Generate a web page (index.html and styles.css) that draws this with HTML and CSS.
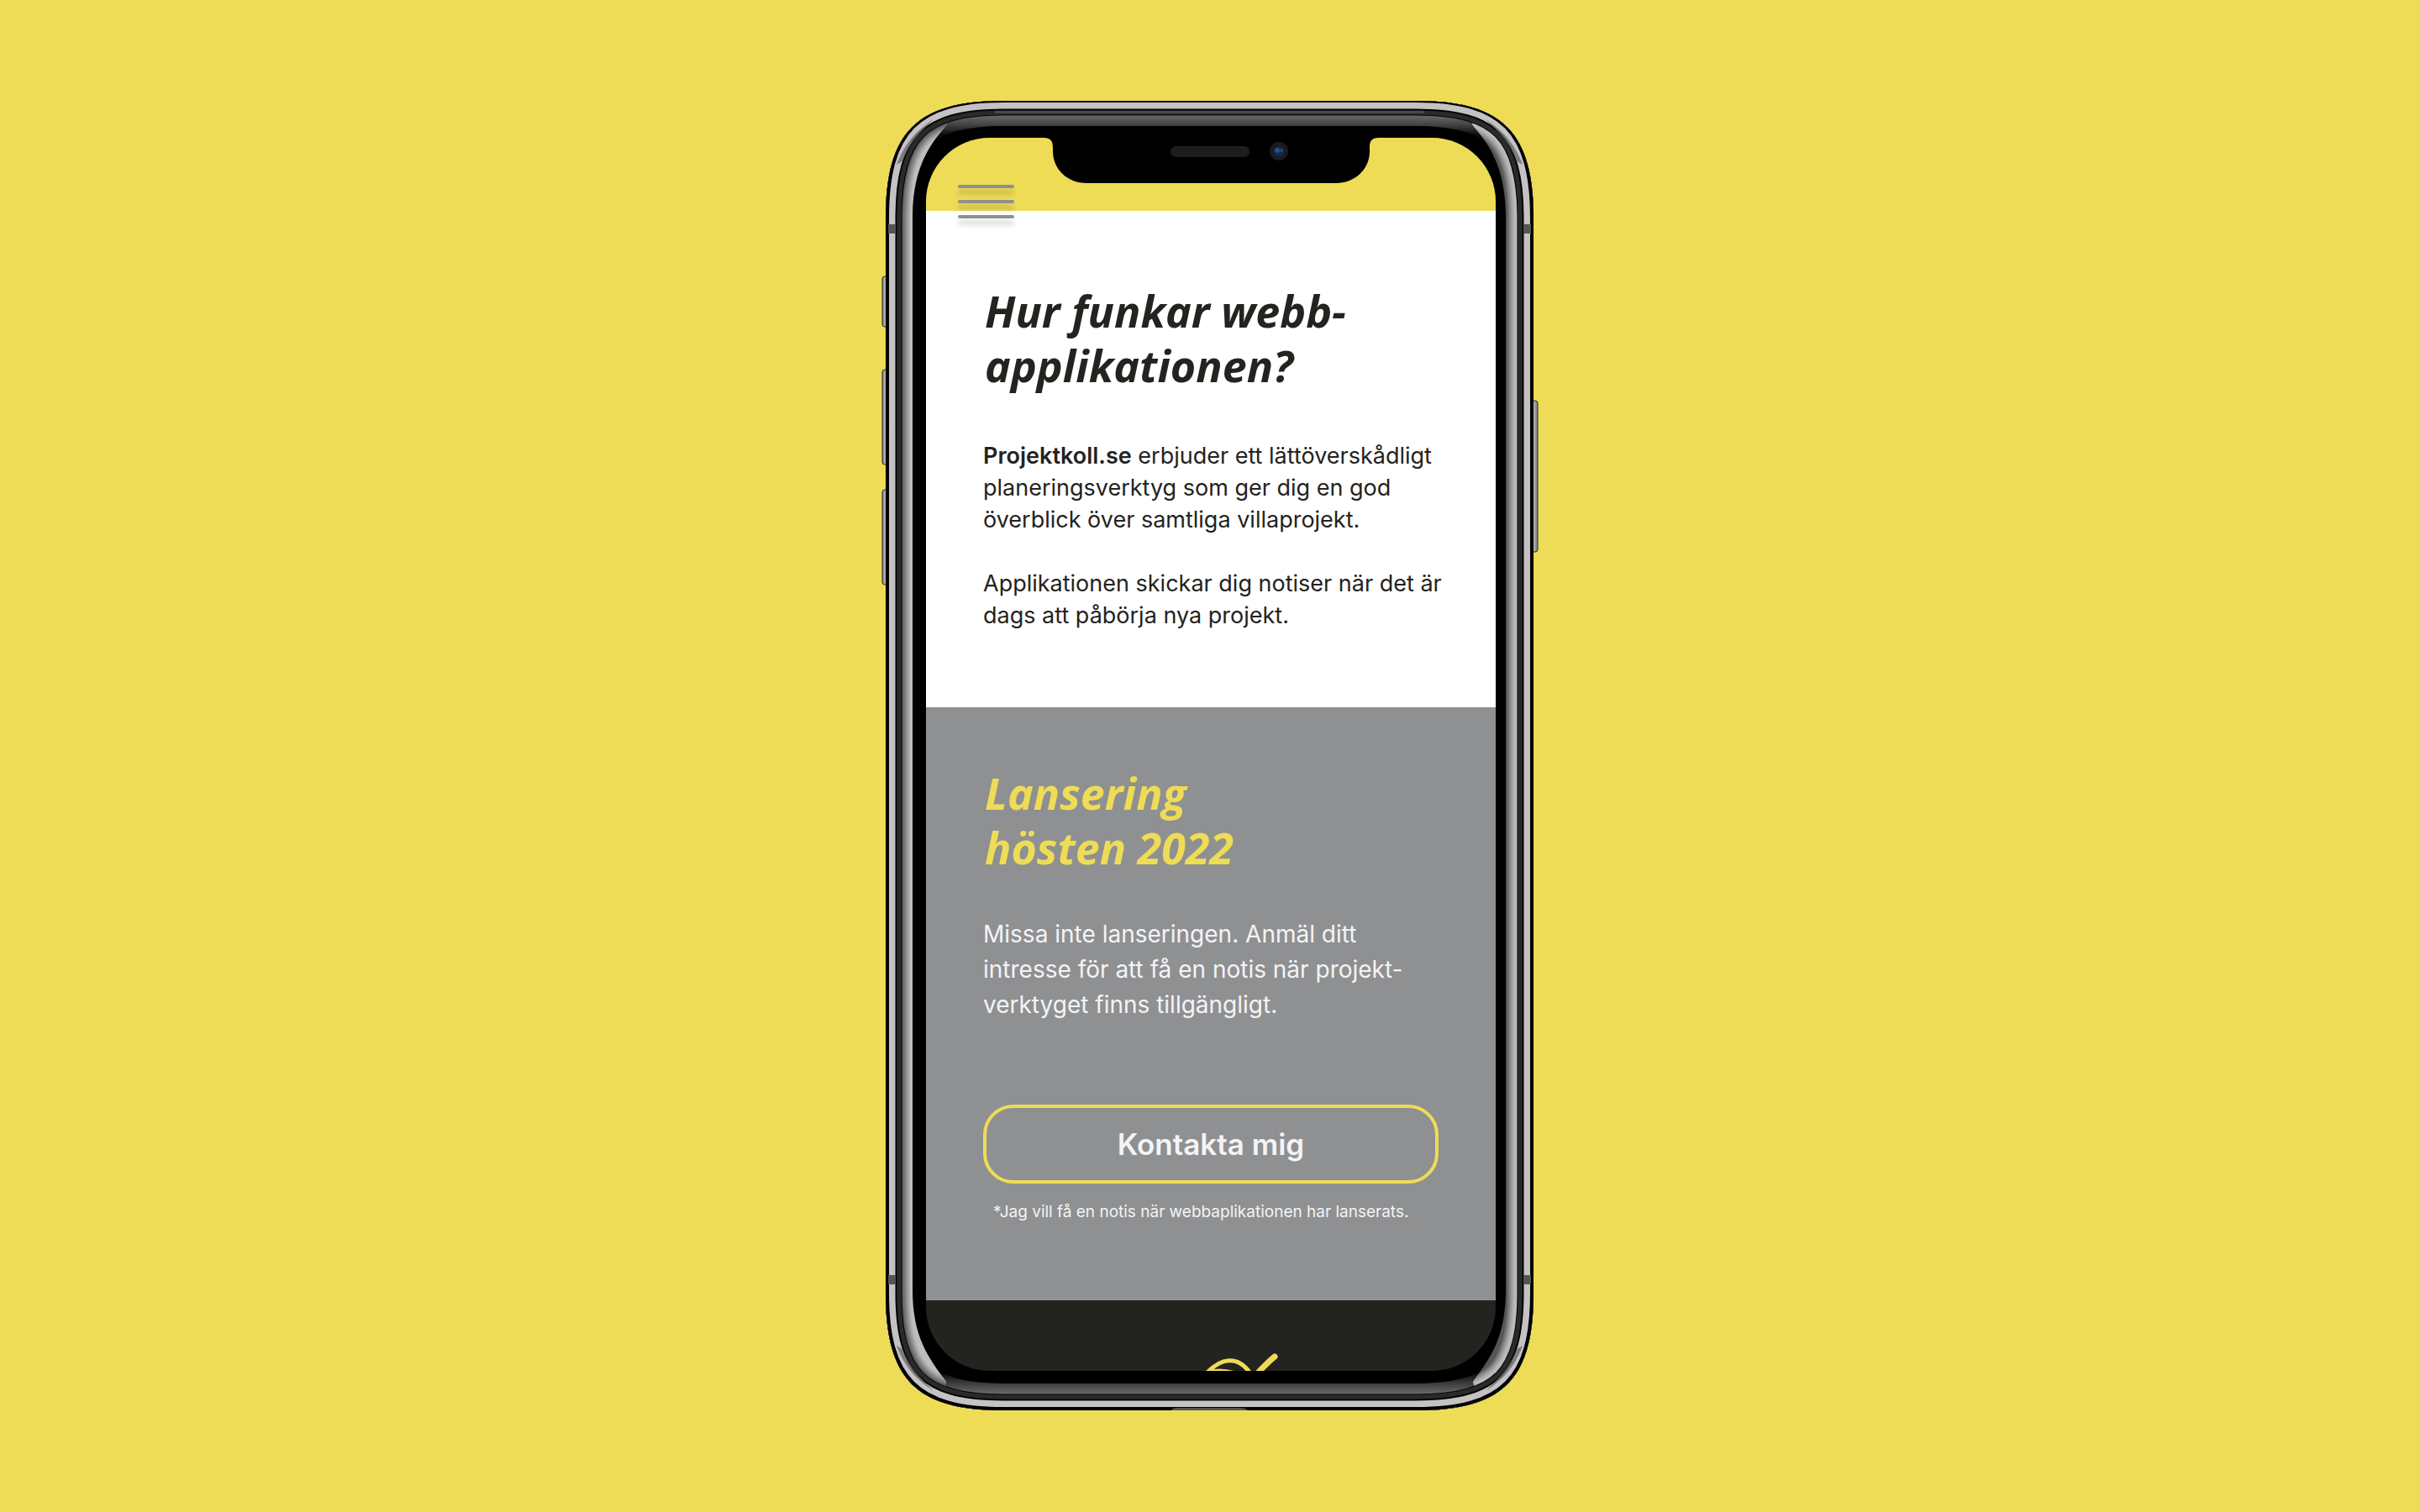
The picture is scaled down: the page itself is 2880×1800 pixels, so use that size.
FILE: index.html
```html
<!DOCTYPE html>
<html lang="sv">
<head>
<meta charset="utf-8">
<meta name="viewport" content="width=device-width, initial-scale=1">
<title>Projektkoll.se</title>
<link rel="stylesheet" href="styles.css">
</head>
<body>
<div class="phone">
  <svg class="phone-frame" viewBox="0 0 782 1560" aria-hidden="true">
    <defs>
      <path id="body" d="M5 140C5 36 41 -2 145 -2H636C740 -2 776 36 776 140V1419C776 1522 740 1559 636 1559H145C41 1559 5 1522 5 1419Z"/>
      <clipPath id="inside"><path d="M5 140C5 37 42 0 145 0H636C739 0 776 37 776 140V1419C776 1522 740 1559 636 1559H145C41 1559 5 1522 5 1419Z"/></clipPath>
      <clipPath id="left-side"><path d="M0 0H64L78 28C60 50 37 76 37 140V1415C37 1472 56 1496 77 1525L64 1560H0Z"/></clipPath>
      <clipPath id="right-side"><path d="M782 0H717L703 28C721 50 743 76 743 140V1415C743 1472 725 1496 704 1525L717 1560H782Z"/></clipPath>
      <linearGradient id="bezel" gradientUnits="userSpaceOnUse" x1="0" y1="0" x2="0" y2="1560">
        <stop offset="0.0105" stop-color="#6c6c6c"/>
        <stop offset="0.0185" stop-color="#424242"/>
        <stop offset="0.026" stop-color="#0a0a0a"/>
        <stop offset="0.971" stop-color="#0a0a0a"/>
        <stop offset="0.978" stop-color="#383838"/>
        <stop offset="0.986" stop-color="#656565"/>
      </linearGradient>
      <linearGradient id="key" x1="0" y1="0" x2="1" y2="0">
        <stop offset="0" stop-color="#777"/><stop offset="0.4" stop-color="#bbb"/><stop offset="1" stop-color="#777"/>
      </linearGradient>
      <path id="facet" d="M18 76C27 53 38 38 62 22C48 36 34 49 25 72Z"/>
    </defs>
    <g fill="url(#key)" stroke="#2b2b2b" stroke-width="1">
      <rect x="1" y="209" width="9" height="60" rx="3"/>
      <rect x="1" y="320" width="9" height="113" rx="3"/>
      <rect x="1" y="463" width="9" height="113" rx="3"/>
      <rect x="772" y="357" width="9" height="180" rx="3"/>
    </g>
    <g clip-path="url(#inside)">
      <use href="#body" fill="#000"/>
      <g fill="none">
        <use href="#body" stroke="url(#bezel)" stroke-width="64"/>
        <g clip-path="url(#left-side)">
          <use href="#body" stroke="#bdbdbd" stroke-width="80"/>
          <use href="#body" stroke="#adadad" stroke-width="58"/>
          <use href="#body" stroke="#9a9a9a" stroke-width="54"/>
          <use href="#body" stroke="#868686" stroke-width="50"/>
          <use href="#body" stroke="#727272" stroke-width="46"/>
          <use href="#body" stroke="#5c5c5c" stroke-width="42"/>
        </g>
        <g clip-path="url(#right-side)">
          <use href="#body" stroke="#555" stroke-width="80"/>
          <use href="#body" stroke="#6e6e6e" stroke-width="62"/>
          <use href="#body" stroke="#868686" stroke-width="58"/>
          <use href="#body" stroke="#9a9a9a" stroke-width="54"/>
          <use href="#body" stroke="#adadad" stroke-width="50"/>
          <use href="#body" stroke="#bababa" stroke-width="46"/>
        </g>
        <use href="#body" stroke="#050505" stroke-width="39"/>
        <use href="#body" stroke="#2a2a2a" stroke-width="37"/>
        <use href="#body" stroke="#050505" stroke-width="27"/>
        <use href="#body" stroke="#c5c2c4" stroke-width="23"/>
      </g>
      <g fill="#5f5f5f" opacity="0.7">
        <use href="#facet"/>
        <use href="#facet" transform="matrix(-1 0 0 1 781 0)"/>
        <use href="#facet" transform="matrix(1 0 0 -1 0 1558)"/>
        <use href="#facet" transform="matrix(-1 0 0 -1 781 1558)"/>
      </g>
      <use href="#body" fill="none" stroke="#000" stroke-width="8"/>
      <path d="M135 13.500H646" stroke="#4a4a4a" stroke-width="3"/>
      <g fill="#555">
        <path d="M8 147h9v11h-9zM764 147h9v11h-9zM8 1398h9v11h-9zM764 1398h9v11h-9z"/>
        <path d="M345 1559C346 1556 350 1556 354 1556H426C431 1556 434 1557 436 1559Z"/>
      </g>
    </g>
  </svg>

  <main class="screen">
    <header class="topbar">
      <button class="menu" type="button" aria-label="Meny">
        <span class="menu-bar"></span>
        <span class="menu-bar"></span>
        <span class="menu-bar"></span>
      </button>
      <svg class="notch" viewBox="0 0 400 56" aria-hidden="true">
        <path d="M0 0V-2H400V0C388 0 389 8 389 16C389 38 371 54 349 54H52C30 54 12 38 12 16C12 8 13 0 0 0Z"/>
        <rect x="152" y="10" width="94" height="13" rx="6" fill="#1d1d1d"/>
        <circle cx="281" cy="16" r="11" fill="#1b1b1d"/>
        <circle cx="281" cy="16" r="6" fill="#142849"/>
        <circle cx="279" cy="15" r="3" fill="#23528a"/>
        <circle cx="284" cy="15" r="2" fill="#1f4777"/>
      </svg>
    </header>

    <section class="section how">
      <h1 class="title">Hur funkar webb-<br>applikationen?</h1>
      <p class="text"><strong class="brand">Projektkoll.se</strong> erbjuder ett lättöverskådligt<br>planeringsverktyg som ger dig en god<br>överblick över samtliga villaprojekt.</p>
      <p class="text">Applikationen skickar dig notiser när det är<br>dags att påbörja nya projekt.</p>
    </section>

    <section class="section launch">
      <h2 class="title">Lansering<br>hösten 2022</h2>
      <p class="lead">Missa inte lanseringen. Anmäl ditt<br>intresse för att få en notis när projekt-<br>verktyget finns tillgängligt.</p>
      <button class="contact" type="button">Kontakta mig</button>
      <p class="note">*Jag vill få en notis när webbaplikationen har lanserats.</p>
    </section>

    <footer class="footer">
      <svg class="logo" viewBox="0 0 160 100" aria-hidden="true">
        <g fill="none" stroke="#eedc56" stroke-linecap="round">
          <path stroke-width="5" d="M68 38C90 9 114 6 130 35L136 46"/>
          <path stroke-width="3" d="M70 30C84 24 98 25 112 30"/>
          <path stroke-width="7" d="M156 10C146 18 138 27 128 38L112 58"/>
        </g>
      </svg>
    </footer>
  </main>
</div>
</body>
</html>
```
FILE: styles.css
```css
:root {
  --yellow: #eedc56;
  --grey: #8f9092;
  --dark: #232320;
  --light: #f4f4f4;
}

* {
  box-sizing: border-box;
}

body {
  margin: 0;
  min-height: 100vh;
  display: flex;
  align-items: center;
  justify-content: center;
  background: var(--yellow);
  color: var(--dark);
  font-family: Inter, "Open Sans", sans-serif;
}

.phone {
  position: relative;
  width: 782px;
  padding: 44px 51px 48px 53px;
}

.phone-frame {
  position: absolute;
  inset: 0;
  width: 100%;
  height: 100%;
}

.screen {
  position: relative;
  aspect-ratio: 678 / 1468;
  overflow: hidden;
  border-radius: 76px;
  background: var(--dark);
}

.topbar {
  position: relative;
  height: 87px;
  padding: 56px 38px 0;
  background: var(--yellow);
}

.menu {
  position: relative;
  display: flex;
  flex-direction: column;
  gap: 14px;
  width: 67px;
  padding: 0;
  border: 0;
  background: none;
  cursor: pointer;
}

.menu-bar {
  height: 4px;
  border-radius: 2px;
  background: var(--grey);
  box-shadow: 0 7px 6px rgba(0, 0, 0, 0.2);
}

.notch {
  position: absolute;
  top: 0;
  left: 50%;
  width: 400px;
  transform: translateX(-50%);
}

.section {
  padding: 0 68px;
}

.title {
  margin: 0;
  padding-left: 2px;
  font-family: "Open Sans", "Noto Sans", sans-serif;
  font-size: 52px;
  font-style: italic;
  font-weight: 700;
  line-height: 65px;
}

.how {
  padding-top: 86px;
  padding-bottom: 90px;
  background: #fff;
}

.text {
  margin: 38px 0 0;
  font-size: 27px;
  line-height: 38px;
  white-space: nowrap;
}

.title + .text {
  margin-top: 57px;
}

.brand {
  font-weight: 600;
}

.launch {
  padding-top: 69px;
  padding-bottom: 90px;
  background: var(--grey);
  color: var(--light);
}

.launch .title {
  color: var(--yellow);
}

.lead {
  margin: 50px 0 0;
  font-size: 28px;
  font-weight: 400;
  line-height: 42px;
  white-space: nowrap;
}

.contact {
  display: block;
  width: 100%;
  height: 94px;
  margin-top: 98px;
  border: 4px solid var(--yellow);
  border-radius: 36px;
  background: none;
  color: var(--light);
  font-family: inherit;
  font-size: 35px;
  font-weight: 600;
  cursor: pointer;
}

.note {
  margin: 19px 0 0;
  padding-left: 12px;
  font-size: 19px;
  line-height: 30px;
  white-space: nowrap;
}

.footer {
  display: flex;
  justify-content: center;
  padding-top: 57px;
}

.logo {
  width: 160px;
}
```
